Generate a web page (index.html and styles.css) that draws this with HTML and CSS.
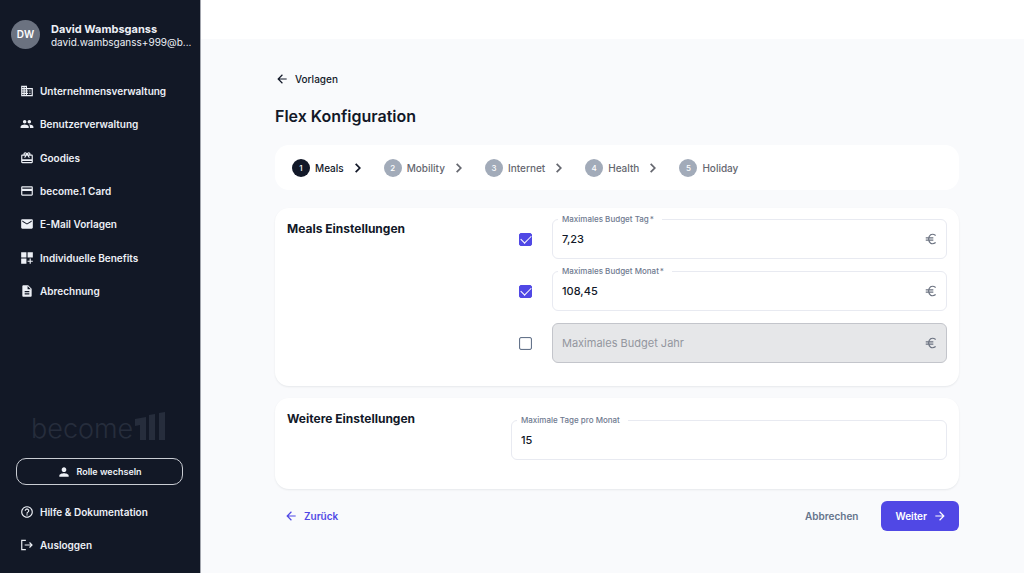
FILE: index.html
```html
<!DOCTYPE html>
<html lang="de">
<head>
    <meta charset="UTF-8">
    <meta name="viewport" content="width=device-width, initial-scale=1.0">
    <title>become.1 - Flex Konfiguration</title>
    <link rel="stylesheet" href="styles.css">
</head>
<body>
    <aside class="sidebar">
        <div class="profile">
            <div class="avatar">DW</div>
            <div class="profile-text">
                <div class="profile-name">David Wambsganss</div>
                <div class="profile-mail">david.wambsganss+999@b...</div>
            </div>
        </div>

        <nav class="menu">
            <a href="#">
                <svg class="icon" viewBox="0 0 24 24"><path d="M12 7V3H2v18h20V7H12zM6 19H4v-2h2v2zm0-4H4v-2h2v2zm0-4H4V9h2v2zm0-4H4V5h2v2zm4 12H8v-2h2v2zm0-4H8v-2h2v2zm0-4H8V9h2v2zm0-4H8V5h2v2zm10 12h-8v-2h2v-2h-2v-2h2v-2h-2V9h8v10zm-2-8h-2v2h2v-2zm0 4h-2v2h2v-2z"/></svg>
                Unternehmensverwaltung
            </a>
            <a href="#">
                <svg class="icon" viewBox="0 0 24 24"><path d="M16 11c1.660 0 2.990-1.340 2.990-3S17.660 5 16 5c-1.660 0-3 1.340-3 3s1.340 3 3 3zm-8 0c1.660 0 2.990-1.340 2.990-3S9.660 5 8 5C6.340 5 5 6.340 5 8s1.340 3 3 3zm0 2c-2.330 0-7 1.170-7 3.500V19h14v-2.500c0-2.330-4.670-3.500-7-3.500zm8 0c-.29 0-.62.02-.97.05 1.160.84 1.970 1.970 1.970 3.450V19h6v-2.500c0-2.330-4.670-3.500-7-3.500z"/></svg>
                Benutzerverwaltung
            </a>
            <a href="#">
                <svg class="icon" viewBox="0 0 24 24"><path d="M20 6h-2.180c.11-.31.18-.65.18-1 0-1.660-1.340-3-3-3-1.050 0-1.960.54-2.500 1.350l-.5.67-.5-.68C10.960 2.540 10.050 2 9 2 7.340 2 6 3.340 6 5c0 .35.070.69.180 1H4c-1.110 0-1.990.89-1.990 2L2 19c0 1.110.89 2 2 2h16c1.110 0 2-.89 2-2V8c0-1.110-.89-2-2-2zm-5-2c.55 0 1 .45 1 1s-.45 1-1 1-1-.45-1-1 .45-1 1-1zM9 4c.55 0 1 .45 1 1s-.45 1-1 1-1-.45-1-1 .45-1 1-1zm11 15H4v-2h16v2zm0-5H4V8h5.080L7 10.830 8.620 12 12 7.400l3.380 4.600L17 10.830 14.920 8H20v6z"/></svg>
                Goodies
            </a>
            <a href="#">
                <svg class="icon" viewBox="0 0 24 24"><path d="M20 4H4c-1.110 0-1.990.89-1.990 2L2 18c0 1.110.89 2 2 2h16c1.110 0 2-.89 2-2V6c0-1.110-.89-2-2-2zm0 14H4v-6h16v6zm0-10H4V6h16v2z"/></svg>
                become.1 Card
            </a>
            <a href="#">
                <svg class="icon" viewBox="0 0 24 24"><path d="M20 4H4c-1.100 0-1.990.9-1.990 2L2 18c0 1.100.9 2 2 2h16c1.100 0 2-.9 2-2V6c0-1.100-.9-2-2-2zm0 4l-8 5-8-5V6l8 5 8-5v2z"/></svg>
                E-Mail Vorlagen
            </a>
            <a href="#">
                <svg class="icon" viewBox="0 0 24 24"><path d="M2 2h9v9H2zM13 2h9v9h-9zM2 13h9v9H2zM18.500 13h-2v3.500H13v2h3.500V22h2v-3.500H22v-2h-3.500z"/></svg>
                Individuelle Benefits
            </a>
            <a href="#">
                <svg class="icon" viewBox="0 0 24 24"><path d="M14 2H6c-1.100 0-1.990.9-1.990 2L4 20c0 1.100.89 2 1.990 2H18c1.100 0 2-.9 2-2V8l-6-6zm2 16H8v-2h8v2zm0-4H8v-2h8v2zm-3-5V3.500L18.500 9H13z"/></svg>
                Abrechnung
            </a>
        </nav>

        <div class="logo">
            <span>become</span>
            <svg viewBox="0 0 32 28"><path d="M0 7L11 5V28H5V13L0 14zM14 3L20 2V28H14zM24 1L30 0V28H24z"/></svg>
        </div>

        <button class="role-btn" type="button">
            <svg class="icon" viewBox="0 0 24 24"><path d="M12 12c2.210 0 4-1.790 4-4s-1.790-4-4-4-4 1.790-4 4 1.790 4 4 4zm0 2c-2.670 0-8 1.340-8 4v2h16v-2c0-2.660-5.330-4-8-4z"/></svg>
            Rolle wechseln
        </button>

        <nav class="menu menu-bottom">
            <a href="#">
                <svg class="icon" viewBox="0 0 24 24"><path d="M11 18h2v-2h-2v2zm1-16C6.480 2 2 6.480 2 12s4.480 10 10 10 10-4.480 10-10S17.520 2 12 2zm0 18c-4.410 0-8-3.590-8-8s3.590-8 8-8 8 3.590 8 8-3.590 8-8 8zm0-14c-2.210 0-4 1.790-4 4h2c0-1.100.9-2 2-2s2 .9 2 2c0 2-3 1.750-3 5h2c0-2.250 3-2.500 3-5 0-2.210-1.790-4-4-4z"/></svg>
                Hilfe &amp; Dokumentation
            </a>
            <a href="#">
                <svg class="icon" viewBox="0 0 24 24"><path d="M10 3H2v18h8v-2H4V5h6zM17 7l-1.400 1.400 2.600 2.600H8v2h10.200l-2.600 2.600L17 17l5-5z"/></svg>
                Ausloggen
            </a>
        </nav>
    </aside>

    <div class="page">
        <header class="topbar"></header>

        <main class="content">
            <a class="back-link" href="#">
                <svg class="icon" viewBox="0 0 24 24"><path d="M20 11H7.830l5.590-5.590L12 4l-8 8 8 8 1.410-1.410L7.830 13H20v-2z"/></svg>
                Vorlagen
            </a>
            <h1>Flex Konfiguration</h1>

            <ol class="card stepper">
                <li class="active"><span class="step-no">1</span>Meals
                    <svg class="chevron" viewBox="0 0 24 24"><path d="M8 5l7 7-7 7"/></svg></li>
                <li><span class="step-no">2</span>Mobility
                    <svg class="chevron" viewBox="0 0 24 24"><path d="M8 5l7 7-7 7"/></svg></li>
                <li><span class="step-no">3</span>Internet
                    <svg class="chevron" viewBox="0 0 24 24"><path d="M8 5l7 7-7 7"/></svg></li>
                <li><span class="step-no">4</span>Health
                    <svg class="chevron" viewBox="0 0 24 24"><path d="M8 5l7 7-7 7"/></svg></li>
                <li><span class="step-no">5</span>Holiday</li>
            </ol>

            <form>
                <section class="card settings">
                    <h2>Meals Einstellungen</h2>
                    <div class="rows">
                        <div class="row">
                            <input type="checkbox" aria-label="Maximales Budget Tag aktiv" checked>
                            <div class="field">
                                <label for="day">Maximales Budget Tag<span>*</span></label>
                                <input type="text" id="day" value="7,23">
                                <svg class="icon" viewBox="0 0 24 24"><path class="euro" d="M20 6C13 1 8 6 8 12s5 11 12 6M3 10h13M3 14h13"/></svg>
                            </div>
                        </div>
                        <div class="row">
                            <input type="checkbox" aria-label="Maximales Budget Monat aktiv" checked>
                            <div class="field">
                                <label for="month">Maximales Budget Monat<span>*</span></label>
                                <input type="text" id="month" value="108,45">
                                <svg class="icon" viewBox="0 0 24 24"><path class="euro" d="M20 6C13 1 8 6 8 12s5 11 12 6M3 10h13M3 14h13"/></svg>
                            </div>
                        </div>
                        <div class="row">
                            <input type="checkbox" aria-label="Maximales Budget Jahr aktiv">
                            <div class="field disabled">
                                <input type="text" placeholder="Maximales Budget Jahr" aria-label="Maximales Budget Jahr" disabled>
                                <svg class="icon" viewBox="0 0 24 24"><path class="euro" d="M20 6C13 1 8 6 8 12s5 11 12 6M3 10h13M3 14h13"/></svg>
                            </div>
                        </div>
                    </div>
                </section>

                <section class="card settings more">
                    <h2>Weitere Einstellungen</h2>
                    <div class="rows">
                        <div class="field">
                            <label for="days">Maximale Tage pro Monat</label>
                            <input type="text" id="days" value="15">
                        </div>
                    </div>
                </section>

                <div class="actions">
                    <button class="btn btn-back" type="button">
                        <svg class="icon" viewBox="0 0 24 24"><path d="M20 11H7.830l5.590-5.590L12 4l-8 8 8 8 1.410-1.410L7.830 13H20v-2z"/></svg>
                        Zurück
                    </button>
                    <button class="btn btn-cancel" type="button">Abbrechen</button>
                    <button class="btn btn-next" type="submit">
                        Weiter
                        <svg class="icon" viewBox="0 0 24 24"><path d="M12 4l-1.410 1.410L16.170 11H4v2h12.170l-5.580 5.590L12 20l8-8z"/></svg>
                    </button>
                </div>
            </form>
        </main>
    </div>
</body>
</html>
```

FILE: styles.css
```css
* {
    box-sizing: border-box;
}
body {
    margin: 0;
    display: flex;
    min-height: 100vh;
    font-family: Inter, "Liberation Sans", sans-serif;
    font-size: 10px;
    font-weight: 500;
    line-height: 16px;
    color: #121828;
    background-color: #f9fafc;
}
a {
    color: inherit;
    text-decoration: none;
}
button, input {
    font: inherit;
    color: inherit;
}
.icon {
    width: 14px;
    height: 14px;
    fill: currentColor;
    flex: none;
}

/* Sidebar */
.sidebar {
    width: 201px;
    flex: none;
    display: flex;
    flex-direction: column;
    padding: 20px 0 11px;
    background-color: #121826;
    border-right: 1px solid #a3a6ae;
    color: #edf0f6;
}
.profile {
    display: flex;
    align-items: center;
    gap: 11px;
    padding: 0 8px 0 11px;
}
.avatar {
    width: 29px;
    height: 29px;
    flex: none;
    border-radius: 50%;
    background-color: #6b7280;
    color: #fff;
    font-weight: 600;
    line-height: 29px;
    text-align: center;
}
.profile-text {
    min-width: 0;
    padding-top: 3px;
    line-height: 13px;
}
.profile-name {
    font-size: 11px;
    font-weight: 700;
}
.profile-mail {
    font-weight: 400;
    overflow: hidden;
    white-space: nowrap;
    text-overflow: ellipsis;
}
.menu {
    display: grid;
    grid-auto-rows: 1fr;
    height: 234px;
    margin-top: 25px;
}
.menu a {
    display: flex;
    align-items: center;
    gap: 6px;
    padding: 0 20px;
    font-weight: 600;
}
.menu-bottom {
    height: 67px;
    margin-top: 10px;
}
.logo {
    display: flex;
    align-items: flex-end;
    gap: 2px;
    margin: auto 0 18px 31px;
    color: #262d3c;
    font-size: 27px;
    font-weight: 300;
    line-height: 22px;
}
.logo svg {
    width: 32px;
    height: 28px;
    fill: currentColor;
}
.role-btn {
    display: flex;
    align-items: center;
    justify-content: center;
    gap: 5px;
    height: 27px;
    margin: 0 17px 0 16px;
    background: none;
    border: 1px solid #c9ccd3;
    border-radius: 10px;
    font-size: 9px;
    font-weight: 600;
    cursor: pointer;
}

/* Page */
.page {
    flex: 1;
    min-width: 0;
}
.topbar {
    height: 39px;
    background-color: #fff;
}
.content {
    padding: 32px 65px 42px 74px;
}
.back-link {
    display: flex;
    align-items: center;
    gap: 6px;
    width: max-content;
    height: 16px;
}
h1 {
    margin: 17px 0;
    font-size: 16px;
    font-weight: 600;
    line-height: 24px;
}
.card {
    background-color: #fff;
    border-radius: 14px;
    box-shadow: 0 1px 2px rgba(18, 24, 40, 0.08);
}
.stepper {
    display: flex;
    align-items: center;
    gap: 19px;
    height: 45px;
    margin: 0 0 18px;
    padding: 0 17px;
    list-style: none;
    box-shadow: none;
    color: #65676f;
}
.stepper li {
    display: flex;
    align-items: center;
}
.stepper .active {
    color: #121828;
}
.step-no {
    width: 18px;
    height: 18px;
    margin-right: 5px;
    border-radius: 50%;
    background-color: #a2abb9;
    color: #fff;
    font-size: 8px;
    line-height: 18px;
    text-align: center;
}
.active .step-no {
    background-color: #121828;
}
.chevron {
    width: 14px;
    height: 14px;
    margin-left: 7px;
    fill: none;
    stroke: currentColor;
    stroke-width: 3;
}

/* Settings cards */
.settings {
    display: grid;
    grid-template-columns: 224px 1fr;
    margin-bottom: 12px;
    padding: 11px 12px 23px 12px;
}
h2 {
    margin: 0;
    font-size: 12px;
    font-weight: 700;
    line-height: 20px;
}
.rows {
    display: grid;
    gap: 12px;
}
.row {
    display: flex;
    align-items: center;
    gap: 20px;
    padding-left: 8px;
}
.more {
    padding-bottom: 29px;
}
.more .rows {
    padding-top: 11px;
}
.field {
    position: relative;
    display: flex;
    align-items: center;
    flex: 1;
    height: 40px;
    padding: 0 8px 0 9px;
    border: 1px solid #e8eaf1;
    border-radius: 6px;
}
.field label {
    position: absolute;
    top: -7px;
    left: 5px;
    padding: 0 8px 0 4px;
    background-color: #fff;
    color: #6f7a8f;
    font-size: 8px;
    line-height: 12px;
}
.field label span {
    margin-left: 1px;
}
.field input {
    flex: 1;
    min-width: 0;
    padding: 0;
    border: none;
    outline: none;
    background: none;
    font-size: 11px;
}
.field.disabled {
    background-color: #e6e7e9;
    border-color: #c3c5cb;
}
.field input::placeholder {
    color: #93969e;
    font-weight: 400;
    opacity: 1;
}
.euro {
    fill: none;
    stroke: #6b7280;
    stroke-width: 2;
}
input[type="checkbox"] {
    appearance: none;
    width: 13px;
    height: 13px;
    margin: 0;
    border: 1px solid #65748b;
    border-radius: 2px;
    box-shadow: inset 0 0 1px #65748b;
}
input[type="checkbox"]:checked {
    display: grid;
    place-items: center;
    background-color: #5048e5;
    border-color: #5048e5;
    box-shadow: none;
}
input[type="checkbox"]:checked::before {
    content: "";
    width: 9px;
    height: 5px;
    margin-bottom: 3px;
    border-left: 1px solid #fff;
    border-bottom: 1px solid #fff;
    transform: rotate(-45deg);
}

/* Actions */
.actions {
    display: flex;
    align-items: center;
}
.btn {
    display: flex;
    align-items: center;
    gap: 6px;
    height: 30px;
    padding: 0 9px;
    border: none;
    border-radius: 6px;
    background: none;
    font-weight: 600;
    cursor: pointer;
}
.btn-back {
    margin-right: auto;
    color: #5048e5;
}
.btn-cancel {
    margin-right: 14px;
    color: #65748b;
}
.btn-next {
    padding: 0 12px 0 14px;
    background-color: #5048e5;
    color: #fff;
}
```
